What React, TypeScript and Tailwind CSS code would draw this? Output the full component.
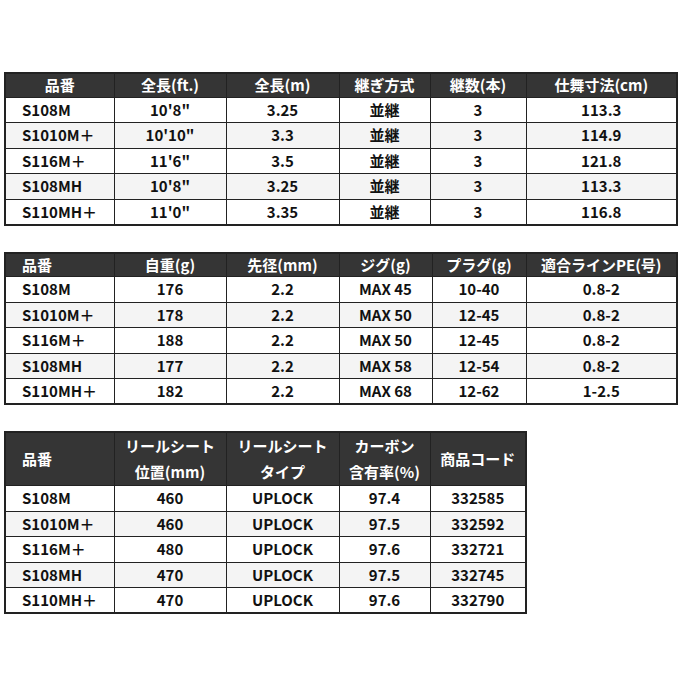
const font = { fontFamily: '"Noto Sans CJK JP", "Noto Sans", sans-serif' };

type Col = { label: string[]; width: string };
type Spec = { cols: Col[]; rows: string[][]; headLeft: boolean };

const models = ['S108M', 'S1010M＋', 'S116M＋', 'S108MH', 'S110MH＋'];

const table1: Spec = {
  headLeft: false,
  cols: [
    { label: ['品番'], width: 'w-[109px]' },
    { label: ['全長(ft.)'], width: 'w-[112px]' },
    { label: ['全長(m)'], width: 'w-[113px]' },
    { label: ['継ぎ方式'], width: 'w-[91px]' },
    { label: ['継数(本)'], width: 'w-[96px]' },
    { label: ['仕舞寸法(cm)'], width: 'w-[151px]' },
  ],
  rows: [
    ["10'8\"", '3.25', '並継', '3', '113.3'],
    ["10'10\"", '3.3', '並継', '3', '114.9'],
    ["11'6\"", '3.5', '並継', '3', '121.8'],
    ["10'8\"", '3.25', '並継', '3', '113.3'],
    ["11'0\"", '3.35', '並継', '3', '116.8'],
  ],
};

const table2: Spec = {
  headLeft: true,
  cols: [
    { label: ['品番'], width: 'w-[109px]' },
    { label: ['自重(g)'], width: 'w-[112px]' },
    { label: ['先径(mm)'], width: 'w-[113px]' },
    { label: ['ジグ(g)'], width: 'w-[93px]' },
    { label: ['プラグ(g)'], width: 'w-[94px]' },
    { label: ['適合ラインPE(号)'], width: 'w-[151px]' },
  ],
  rows: [
    ['176', '2.2', 'MAX 45', '10-40', '0.8-2'],
    ['178', '2.2', 'MAX 50', '12-45', '0.8-2'],
    ['188', '2.2', 'MAX 50', '12-45', '0.8-2'],
    ['177', '2.2', 'MAX 58', '12-54', '0.8-2'],
    ['182', '2.2', 'MAX 68', '12-62', '1-2.5'],
  ],
};

const table3: Spec = {
  headLeft: true,
  cols: [
    { label: ['品番'], width: 'w-[109px]' },
    { label: ['リールシート', '位置(mm)'], width: 'w-[112px]' },
    { label: ['リールシート', 'タイプ'], width: 'w-[113px]' },
    { label: ['カーボン', '含有率(%)'], width: 'w-[91px]' },
    { label: ['商品コード'], width: 'w-[96px]' },
  ],
  rows: [
    ['460', 'UPLOCK', '97.4', '332585'],
    ['460', 'UPLOCK', '97.5', '332592'],
    ['480', 'UPLOCK', '97.6', '332721'],
    ['470', 'UPLOCK', '97.5', '332745'],
    ['470', 'UPLOCK', '97.6', '332790'],
  ],
};

function SpecTable({ spec, tall }: { spec: Spec; tall?: boolean }) {
  return (
    <table className="border-collapse border-2 border-[#222] table-fixed text-[15px] font-bold text-[#111]">
      <thead>
        <tr className={tall ? 'h-[48px]' : 'h-[24px]'}>
          {spec.cols.map((col, i) => (
            <th
              key={i}
              className={`${col.width} bg-[#353535] text-white font-bold border border-[#222] p-0 ${
                tall ? 'leading-[26px]' : 'leading-[22px]'
              } ${i === 0 && spec.headLeft ? 'text-left pl-[16px]' : 'text-center'}`}
            >
              {col.label.map((l) => (
                <div key={l}>{l}</div>
              ))}
            </th>
          ))}
        </tr>
      </thead>
      <tbody>
        {spec.rows.map((row, r) => (
          <tr key={r} className={`h-[25.5px] ${r % 2 === 1 ? 'bg-[#f4f4f4]' : 'bg-white'}`}>
            <td className="border border-[#222] text-left pl-[16px] p-0 leading-[22px]">{models[r]}</td>
            {row.map((cell, c) => (
              <td key={c} className="border border-[#222] text-center p-0 leading-[22px]">
                {cell}
              </td>
            ))}
          </tr>
        ))}
      </tbody>
    </table>
  );
}

export default function App() {
  return (
    <div className="w-[680px] h-[680px] bg-white pt-[72px] pl-[4px]" style={font}>
      <div className="flex flex-col items-start gap-[26px]">
        <SpecTable spec={table1} />
        <SpecTable spec={table2} />
        <SpecTable spec={table3} tall />
      </div>
    </div>
  );
}
